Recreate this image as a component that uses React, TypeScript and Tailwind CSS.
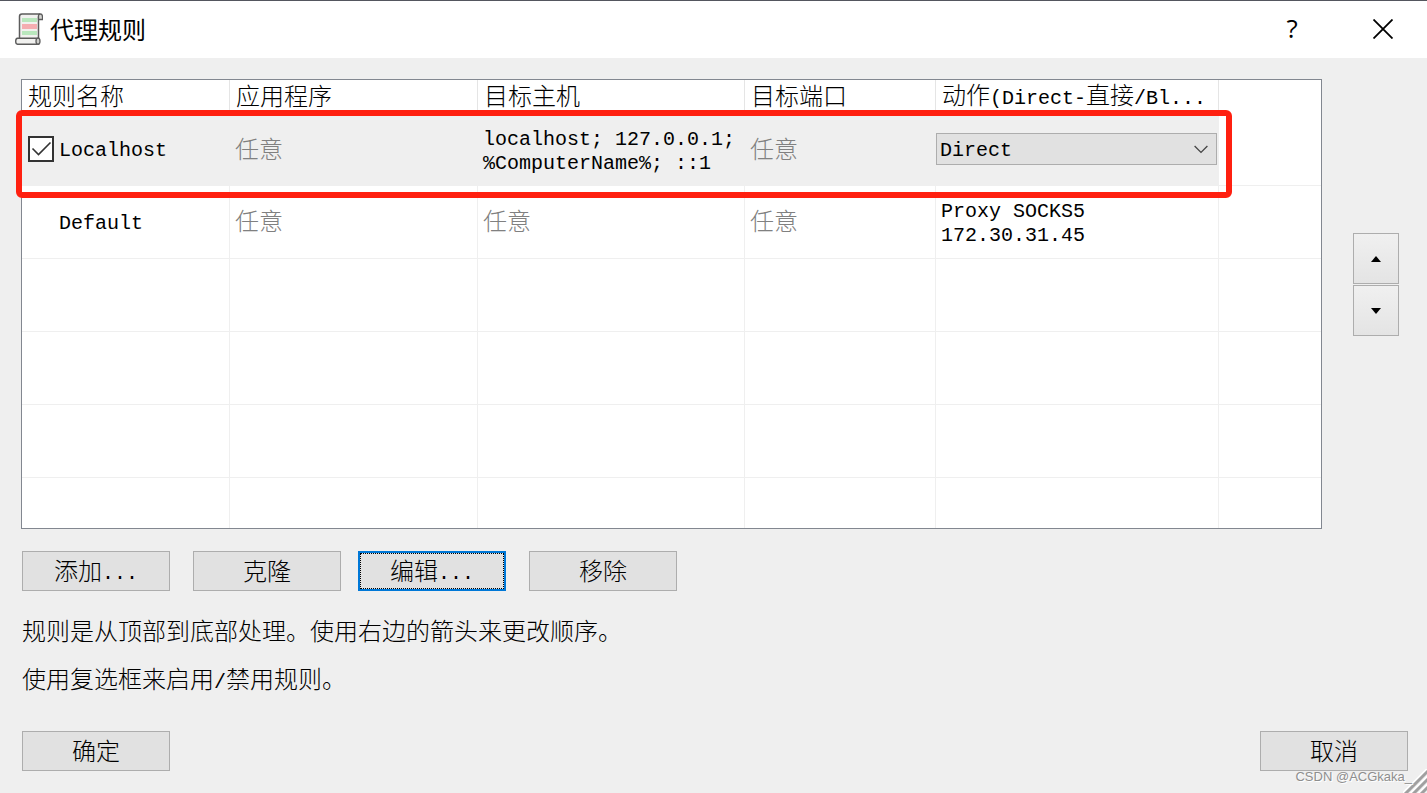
import { useState } from 'react';
import type { ReactNode } from 'react';

// Half-width characters sit on a 12px grid next to the 24px CJK glyphs
function Latin({ children }: { children: ReactNode }) {
  return <span className="text-[20px]">{children}</span>;
}

function ScrollIcon() {
  return (
    <svg width="28" height="32" viewBox="0 0 28 32" fill="none" aria-hidden="true">
      <path d="M4.5 26V3.5Q4.5 1 7 1H25Q23.5 1.500 23.500 4V28" fill="#f1f1ef" stroke="#5c5c5c" strokeWidth="1.500" />
      <path d="M23.500 7V3Q23.500 1 25.500 1Q27.500 1 27.500 4V6.500H23.500" fill="#d5d5d2" stroke="#5c5c5c" strokeWidth="1.300" />
      <rect x="7" y="5" width="15" height="4" fill="#b9e7bd" />
      <rect x="7" y="11" width="15" height="5" fill="#f5adb1" />
      <rect x="7" y="18" width="15" height="4" fill="#b9e7bd" />
      <path d="M2.500 25.200H23.500V31.200H2.500Q.7 31 .7 28.200Q.7 25.400 2.500 25.200Z" fill="#f1f1ef" stroke="#5c5c5c" strokeWidth="1.400" />
      <ellipse cx="23" cy="28.200" rx="2" ry="3" fill="#cfcfcc" stroke="#5c5c5c" strokeWidth="1.300" />
    </svg>
  );
}

const button =
  'flex h-10 w-[148px] items-center justify-center border border-[#adadad] bg-[#e1e1e1] pt-[5px] text-[24px] leading-6';
const cell = 'border-r border-b border-[#efefef] px-[5px] pt-1 align-middle';
const selected = 'bg-[#efefef] px-[5px] pt-1 align-middle';
const head = 'border-r border-[#e5e5e5] px-[6px] pt-1 text-left font-light whitespace-nowrap overflow-hidden';

const emptyRows = ['h-[73px]', 'h-[73px]', 'h-[73px]'];

export default function App() {
  const [enabled, setEnabled] = useState(true);
  const [action, setAction] = useState('Direct');

  return (
    <div className="relative flex min-h-screen flex-col overflow-hidden bg-[#efefef] font-['Liberation_Mono','Noto_Sans_CJK_SC',monospace] text-[24px] leading-6 font-light text-black">
      {/* Title bar */}
      <header className="flex h-[58px] items-center border-t border-[#54565e] bg-white pb-0.5 pl-[15px] font-['Noto_Sans_CJK_SC',sans-serif]">
        <ScrollIcon />
        <h1 className="ml-[7px] flex-1 text-[24px] font-normal">代理规则</h1>
        <button type="button" aria-label="帮助" className="h-full w-[94px] pb-0.5 font-['Open_Sans',sans-serif] text-[26px] font-medium">
          ?
        </button>
        <button type="button" aria-label="关闭" className="flex h-full w-[88px] items-center justify-center">
          <svg width="20" height="20" viewBox="0 0 20 20" stroke="#000" strokeWidth="1.800">
            <path d="M.5.5l19 19M19.500.5l-19 19" />
          </svg>
        </button>
      </header>

      <main className="pt-[21px] pl-[21px]">
        <div className="flex items-start gap-[31px] pr-7">
          <div className="relative min-w-0 flex-1 border border-[#828790] bg-white">
            <table className="w-full table-fixed border-separate border-spacing-0">
              <colgroup>
                <col className="w-[208px]" />
                <col className="w-[248px]" />
                <col className="w-[267px]" />
                <col className="w-[191px]" />
                <col className="w-[283px]" />
                <col />
              </colgroup>
              <thead>
                <tr className="h-[33px]">
                  <th className={head}>规则名称</th>
                  <th className={head}>应用程序</th>
                  <th className={head}>目标主机</th>
                  <th className={head}>目标端口</th>
                  <th className={head}>
                    动作<Latin>(Direct-</Latin>直接<Latin>/Bl...</Latin>
                  </th>
                  <th aria-label="空" />
                </tr>
              </thead>
              <tbody>
                <tr className="h-[73px]">
                  <td className="bg-[#efefef] px-[5px] pb-px align-middle">
                    <label className="flex items-center gap-[5px]">
                      <span className="relative ml-px size-[26px]">
                        <input
                          type="checkbox"
                          checked={enabled}
                          onChange={(e) => setEnabled(e.target.checked)}
                          className="block size-[26px] appearance-none border-2 border-[#333] bg-white"
                        />
                        {enabled && (
                          <svg className="pointer-events-none absolute inset-0" width="26" height="26" viewBox="0 0 26 26" fill="none" stroke="#333" strokeWidth="1.600">
                            <path d="M4.500 12.500l6 6L22.500 6.500" />
                          </svg>
                        )}
                      </span>
                      <span className="pt-1 text-[20px]">Localhost</span>
                    </label>
                  </td>
                  <td className={selected}>
                    <span className="text-[#808080]">任意</span>
                  </td>
                  <td className={selected}>
                    <p className="text-[20px] leading-6 whitespace-nowrap">
                      localhost; 127.0.0.1;
                      <br />
                      %ComputerName%; ::1
                    </p>
                  </td>
                  <td className={selected}>
                    <span className="text-[#808080]">任意</span>
                  </td>
                  <td className="bg-[#efefef] pr-0.5 pb-px align-middle">
                    <div className="relative">
                      <select
                        aria-label="动作"
                        value={action}
                        onChange={(e) => setAction(e.target.value)}
                        className="block h-8 w-full appearance-none border border-[#adadad] bg-[#e1e1e1] pt-[3px] pl-[3px] text-[20px] leading-6"
                      >
                        <option>Direct</option>
                        <option>Block</option>
                      </select>
                      <svg className="pointer-events-none absolute top-3 right-[9px]" width="14" height="9" viewBox="0 0 14 9" fill="none" stroke="#444" strokeWidth="1.300">
                        <path d="M.6 1l6.400 6.400L13.400 1" />
                      </svg>
                    </div>
                  </td>
                  <td className="border-b border-[#efefef]" />
                </tr>
                <tr className="h-[73px]">
                  <td className={cell}>
                    <p className="pl-8 text-[20px]">Default</p>
                  </td>
                  <td className={cell}>
                    <span className="text-[#808080]">任意</span>
                  </td>
                  <td className={cell}>
                    <span className="text-[#808080]">任意</span>
                  </td>
                  <td className={cell}>
                    <span className="text-[#808080]">任意</span>
                  </td>
                  <td className={cell}>
                    <p className="text-[20px] leading-6">
                      Proxy SOCKS5
                      <br />
                      172.30.31.45
                    </p>
                  </td>
                  <td className="border-b border-[#efefef]" />
                </tr>
                {emptyRows.map((height, i) => (
                  <tr key={i} className={height}>
                    <td className={cell} />
                    <td className={cell} />
                    <td className={cell} />
                    <td className={cell} />
                    <td className={cell} />
                    <td className="border-b border-[#efefef]" />
                  </tr>
                ))}
                <tr className="h-[50px]">
                  <td className="border-r border-[#efefef]" />
                  <td className="border-r border-[#efefef]" />
                  <td className="border-r border-[#efefef]" />
                  <td className="border-r border-[#efefef]" />
                  <td className="border-r border-[#efefef]" />
                  <td />
                </tr>
              </tbody>
            </table>
            {/* Red marker around the selected rule */}
            <div className="pointer-events-none absolute top-[30px] -left-[6px] h-[88px] w-[1216px] rounded-[6px] border-6 border-[#ff2010]" />
          </div>

          <div className="mt-[154px] flex flex-col gap-px">
            <button type="button" aria-label="上移" className="flex h-[51px] w-[46px] items-center justify-center border border-[#adadad] bg-linear-to-b from-[#f0f0f0] to-[#e4e4e4]">
              <svg width="10" height="6" viewBox="0 0 10 6">
                <path d="M5 0l5 6H0z" />
              </svg>
            </button>
            <button type="button" aria-label="下移" className="flex h-[51px] w-[46px] items-center justify-center border border-[#adadad] bg-linear-to-b from-[#f0f0f0] to-[#e4e4e4]">
              <svg width="10" height="6" viewBox="0 0 10 6">
                <path d="M5 6L0 0h10z" />
              </svg>
            </button>
          </div>
        </div>

        <div className="mt-[22px] ml-px flex">
          <button type="button" className={button}>
            添加<Latin>...</Latin>
          </button>
          <button type="button" className={`${button} ml-[23px]`}>
            克隆
          </button>
          <button
            type="button"
            className="ml-[17px] h-10 w-[148px] border-2 border-[#0078d7] bg-[#e1e1e1] text-[24px] leading-6"
          >
            <span className="flex h-full items-center justify-center border border-dotted border-black pt-[5px]">
              编辑<Latin>...</Latin>
            </span>
          </button>
          <button type="button" className={`${button} ml-[23px]`}>
            移除
          </button>
        </div>

        <div className="mt-[31px] ml-px flex flex-col gap-6">
          <p>规则是从顶部到底部处理。使用右边的箭头来更改顺序。</p>
          <p>
            使用复选框来启用<Latin>/</Latin>禁用规则。
          </p>
        </div>

        <div className="mt-9 mb-[22px] ml-px flex justify-between pr-[19px]">
          <button type="button" className={button}>
            确定
          </button>
          <button type="button" className={button}>
            取消
          </button>
        </div>
      </main>

      {/* Resize grip and watermark */}
      <svg className="absolute right-0 bottom-0" width="24" height="24" viewBox="0 0 24 24">
        <path d="M-1 25L25 -1M7 25L25 7M15 25L25 15" stroke="#fff" strokeWidth="2" />
        <path d="M2 25L25 2M10 25L25 10M18 25L25 18" stroke="#a0a0a0" strokeWidth="3" />
      </svg>
      <span className="absolute right-[15px] bottom-2 font-['Liberation_Sans',sans-serif] text-[13px] leading-4 font-normal text-[#8e8e8e] [text-shadow:1px_1px_0_#fff]">
        CSDN @ACGkaka_
      </span>
    </div>
  );
}
